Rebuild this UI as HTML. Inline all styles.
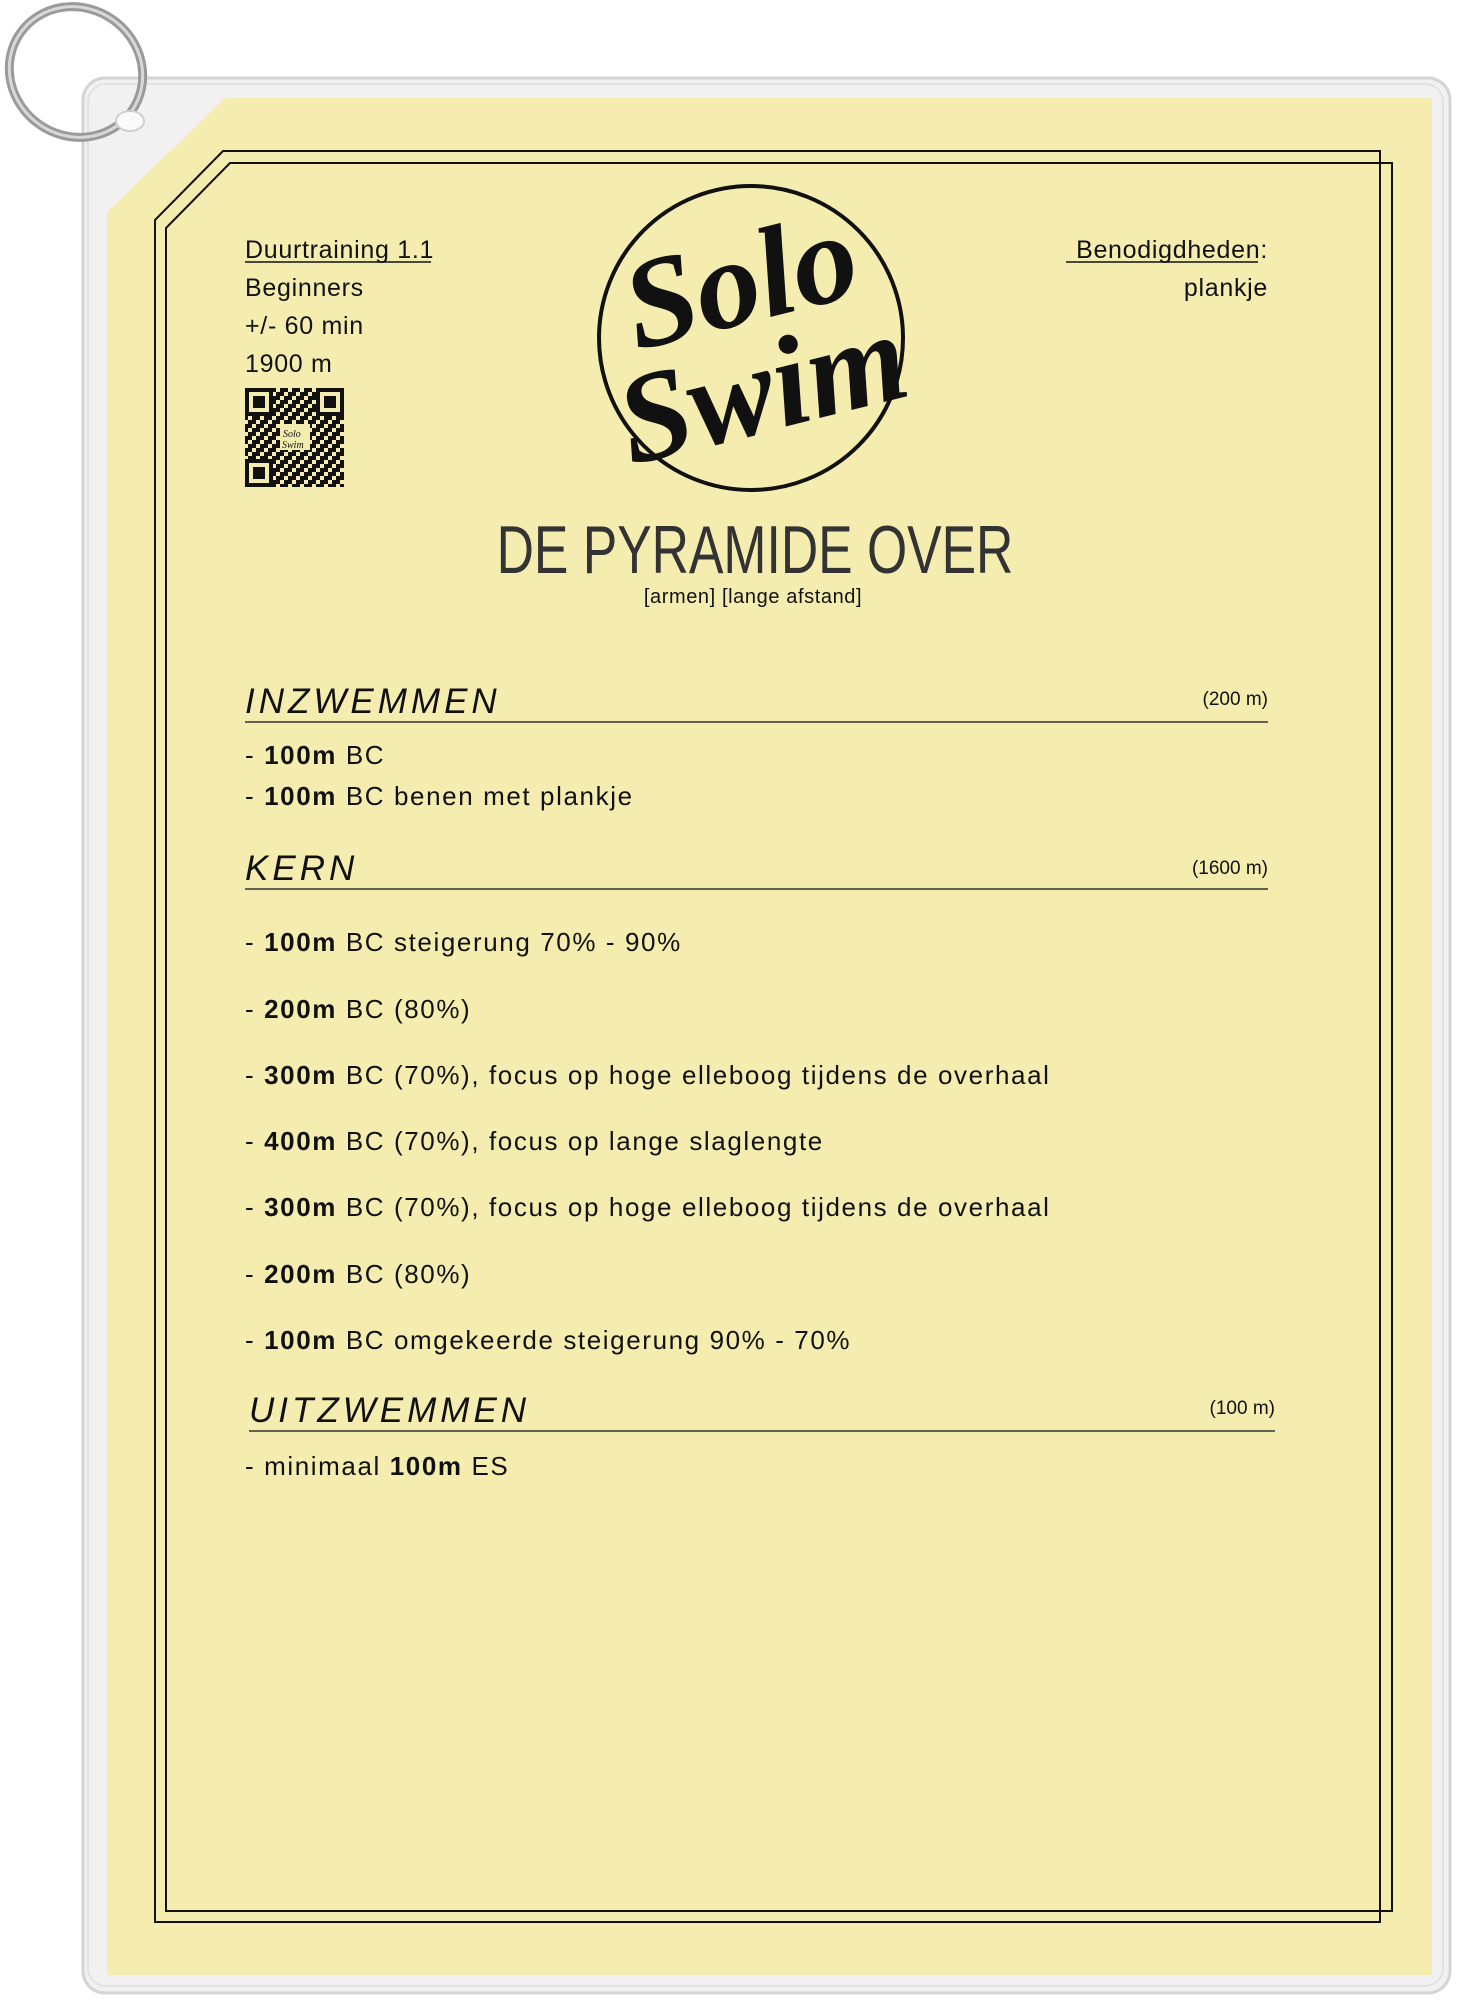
<!DOCTYPE html>
<html><head><meta charset="utf-8"><style>
html,body{margin:0;padding:0;background:#fff;}
svg{display:block;}
text{font-family:"Liberation Sans",sans-serif;fill:#111;}
</style></head><body>
<svg width="1472" height="2000" viewBox="0 0 1472 2000" xmlns="http://www.w3.org/2000/svg">
<defs>
<pattern id="qr" width="12" height="12" patternUnits="userSpaceOnUse">
<rect x="0" y="0" width="4" height="4" fill="#111"/><rect x="8" y="0" width="4" height="8" fill="#111"/>
<rect x="4" y="4" width="4" height="4" fill="#111"/><rect x="0" y="8" width="8" height="4" fill="#111"/>
</pattern>
</defs>
<rect x="83" y="78" width="1367" height="1915" rx="22" fill="#f1f1f1" stroke="#d4d4d4" stroke-width="3"/>
<rect x="88" y="84" width="1355" height="1902" rx="18" fill="none" stroke="#e2e2e2" stroke-width="2"/>
<polygon points="225,98 1432,98 1432,1975 107,1975 107,212" fill="#f5edb0"/>
<polygon points="223,151 1380,151 1380,1922 155,1922 155,220" fill="none" stroke="#111" stroke-width="2"/>
<polygon points="230,163 1392,163 1392,1911 166,1911 166,228" fill="none" stroke="#111" stroke-width="2"/>
<ellipse cx="76" cy="72" rx="68" ry="64" transform="rotate(35 76 72)" fill="none" stroke="#9a9a9a" stroke-width="9"/>
<ellipse cx="76" cy="72" rx="68" ry="64" transform="rotate(35 76 72)" fill="none" stroke="#d8d8d8" stroke-width="3"/>
<ellipse cx="130" cy="121" rx="14" ry="10" fill="#fafafa" stroke="#cfcfcf" stroke-width="2"/>
<g font-size="25" letter-spacing="0.7">
<text x="245" y="258">Duurtraining 1.1</text>
<text x="245" y="296">Beginners</text>
<text x="245" y="334">+/- 60 min</text>
<text x="245" y="372">1900 m</text>
<text x="1268" y="258" text-anchor="end">Benodigdheden:</text>
<text x="1268" y="296" text-anchor="end">plankje</text>
</g>
<line x1="245" y1="262" x2="431" y2="262" stroke="#111" stroke-width="1.5"/>
<line x1="1066" y1="262" x2="1258" y2="262" stroke="#111" stroke-width="1.5"/>
<g>
<rect x="245" y="388" width="99" height="99" fill="url(#qr)"/>
<rect x="245" y="388" width="28" height="28" fill="#f5edb0"/>
<rect x="247" y="390" width="24" height="24" fill="none" stroke="#111" stroke-width="4"/><rect x="253" y="396" width="12" height="12" fill="#111"/>
<rect x="316" y="388" width="28" height="28" fill="#f5edb0"/>
<rect x="318" y="390" width="24" height="24" fill="none" stroke="#111" stroke-width="4"/><rect x="324" y="396" width="12" height="12" fill="#111"/>
<rect x="245" y="459" width="28" height="28" fill="#f5edb0"/>
<rect x="247" y="461" width="24" height="24" fill="none" stroke="#111" stroke-width="4"/><rect x="253" y="467" width="12" height="12" fill="#111"/>
<rect x="280" y="424" width="30" height="26" fill="#f5edb0"/>
<text x="283" y="437" font-size="10" font-style="italic" style="font-family:'Liberation Serif',serif">Solo</text>
<text x="282" y="448" font-size="10" font-style="italic" style="font-family:'Liberation Serif',serif">Swim</text>
</g>
<circle cx="751" cy="338" r="152" fill="none" stroke="#111" stroke-width="4"/>
<g transform="rotate(-14 750 320)">
<text x="750" y="322" font-size="128" font-style="italic" font-weight="bold" text-anchor="middle" style="font-family:'Liberation Serif',serif">Solo</text>
<text x="745" y="432" font-size="128" font-style="italic" font-weight="bold" text-anchor="middle" style="font-family:'Liberation Serif',serif">Swim</text>
</g>
<text x="755" y="573" font-size="68" text-anchor="middle" transform="translate(755 0) scale(0.76 1) translate(-755 0)" style="fill:#333">DE PYRAMIDE OVER</text>
<text x="753" y="603" font-size="20" text-anchor="middle" letter-spacing="0.6">[armen] [lange afstand]</text>
<g font-size="35" font-style="italic" letter-spacing="4">
<text x="245" y="713">INZWEMMEN</text>
<text x="245" y="880">KERN</text>
<text x="249" y="1422">UITZWEMMEN</text>
</g>
<g font-size="19" text-anchor="end">
<text x="1268" y="705">(200 m)</text>
<text x="1268" y="874">(1600 m)</text>
<text x="1275" y="1414">(100 m)</text>
</g>
<line x1="245" y1="722" x2="1268" y2="722" stroke="#333" stroke-width="1.5"/>
<line x1="245" y1="889" x2="1268" y2="889" stroke="#333" stroke-width="1.5"/>
<line x1="249" y1="1431" x2="1275" y2="1431" stroke="#333" stroke-width="1.5"/>
<g font-size="26" letter-spacing="1.6">
<text x="245" y="764">- <tspan font-weight="bold">100m</tspan> BC</text>
<text x="245" y="805">- <tspan font-weight="bold">100m</tspan> BC benen met plankje</text>
<text x="245" y="951">- <tspan font-weight="bold">100m</tspan> BC steigerung 70% - 90%</text>
<text x="245" y="1018">- <tspan font-weight="bold">200m</tspan> BC (80%)</text>
<text x="245" y="1084">- <tspan font-weight="bold">300m</tspan> BC (70%), focus op hoge elleboog tijdens de overhaal</text>
<text x="245" y="1150">- <tspan font-weight="bold">400m</tspan> BC (70%), focus op lange slaglengte</text>
<text x="245" y="1216">- <tspan font-weight="bold">300m</tspan> BC (70%), focus op hoge elleboog tijdens de overhaal</text>
<text x="245" y="1283">- <tspan font-weight="bold">200m</tspan> BC (80%)</text>
<text x="245" y="1349">- <tspan font-weight="bold">100m</tspan> BC omgekeerde steigerung 90% - 70%</text>
<text x="245" y="1475">- minimaal <tspan font-weight="bold">100m</tspan> ES</text>
</g>
</svg>
</body></html>
